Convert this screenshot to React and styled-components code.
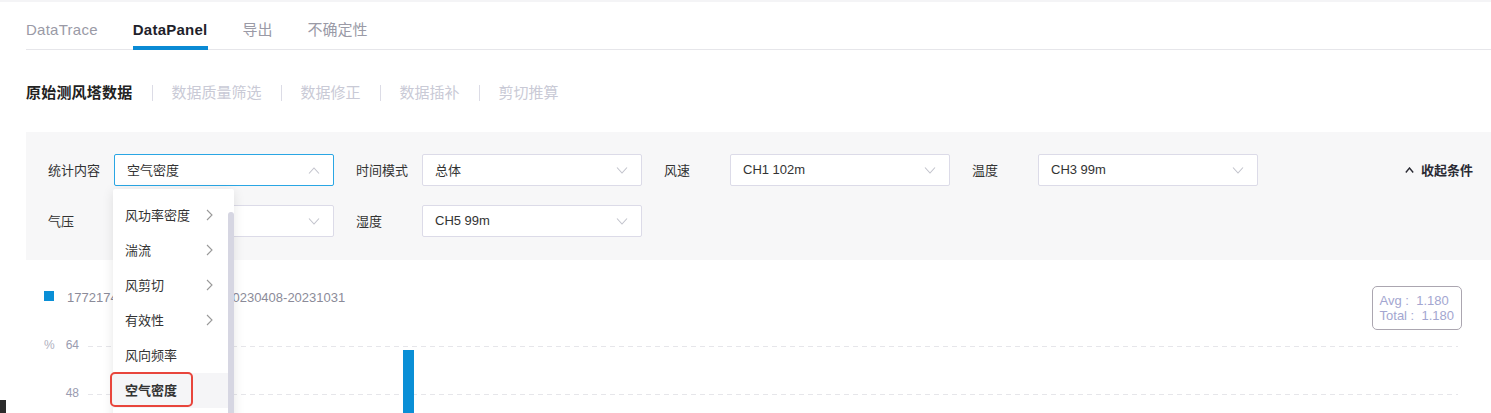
import React from "react";
import styled, { createGlobalStyle } from "styled-components";

const GlobalStyle = createGlobalStyle`
  html, body {
    margin: 0;
    padding: 0;
    overflow: hidden;
    background: #fff;
  }
  body {
    font-family: "Liberation Sans", "Noto Sans CJK SC", sans-serif;
    color: #333;
  }
  * {
    box-sizing: border-box;
  }
`;

const Page = styled.div`
  border-top: 2px solid #f4f4f6;
  padding-left: 26px;
  position: relative;
`;

const TabBar = styled.div`
  display: flex;
  gap: 35px;
  border-bottom: 1px solid #e6e6ea;
`;

const Tab = styled.div`
  padding-top: 18px;
  padding-bottom: 6px;
  line-height: 20px;
  font-size: 15px;
  letter-spacing: ${(p) => (p.$latin ? "0.25px" : "0")};
  margin-bottom: -1px;
  border-bottom: 4px solid ${(p) => (p.$active ? "#0a8ad4" : "transparent")};
  color: ${(p) => (p.$active ? "#1f1f2b" : "#9a9aa6")};
  font-weight: ${(p) => (p.$active ? "bold" : "normal")};
`;

const SubTabs = styled.div`
  display: flex;
  align-items: center;
  margin-top: 32px;
  margin-bottom: 28px;
  line-height: 22px;
  font-size: 15px;
`;

const SubTab = styled.div`
  color: ${(p) => (p.$active ? "#222" : "#c9cad6")};
  font-weight: ${(p) => (p.$active ? "bold" : "normal")};
  letter-spacing: ${(p) => (p.$active ? "0.2px" : "0")};
`;

const SubSep = styled.span`
  width: 1px;
  height: 16px;
  background: #dcdce6;
  margin: 0 18px 0 20px;
`;

const FilterPanel = styled.div`
  display: flex;
  align-items: flex-start;
  background: #f7f7f8;
  padding: 22px 18px 23px 22px;
`;

const Fields = styled.div`
  flex: 1;
  display: flex;
  flex-wrap: wrap;
  column-gap: 22px;
  row-gap: 19px;
`;

const Field = styled.div`
  display: flex;
  align-items: center;
`;

const Label = styled.div`
  width: 66px;
  font-size: 13px;
  color: #333;
  padding-bottom: 2px;
`;

const SelectBox = styled.div`
  position: relative;
  width: 220px;
  height: 32px;
  display: flex;
  align-items: center;
  justify-content: space-between;
  padding: 0 12px;
  background: #fff;
  border: 1px solid ${(p) => (p.$focused ? "#2aa6e4" : "#dcdbe8")};
  border-radius: 2px;
  font-size: 13px;
  color: #333;
`;

const Value = styled.span`
  padding-bottom: 2px;
`;

const Arrow = styled.svg`
  width: 12px;
  height: 7px;
  margin-right: 1px;
`;

const Collapse = styled.div`
  display: flex;
  align-items: center;
  gap: 7px;
  height: 32px;
  padding-bottom: 1px;
  font-size: 13px;
  font-weight: bold;
  color: #2a2a33;
`;

const Menu = styled.div`
  position: absolute;
  top: 34px;
  left: -2px;
  width: 121px;
  height: 235px;
  padding-top: 9px;
  background: #fff;
  box-shadow: 0 2px 12px rgba(0, 0, 0, 0.1);
  border-radius: 2px;
  z-index: 10;
`;

const MenuItem = styled.div`
  position: relative;
  width: 115px;
  height: 35px;
  display: flex;
  align-items: center;
  justify-content: space-between;
  padding: 0 15px 2px 12px;
  font-size: 13px;
  color: #333;
  background: ${(p) => (p.$selected ? "#f5f5f7" : "transparent")};
  font-weight: ${(p) => (p.$selected ? "bold" : "normal")};
`;

const Mark = styled.div`
  position: absolute;
  left: -3px;
  top: -1px;
  width: 83px;
  height: 35px;
  border: 2.5px solid #e8453c;
  border-radius: 5px;
`;

const Thumb = styled.div`
  position: absolute;
  right: 0;
  top: 23px;
  width: 6px;
  height: 212px;
  border-radius: 3px;
  background: #d6d6e2;
`;

const ChartHeader = styled.div`
  display: flex;
  justify-content: space-between;
  align-items: flex-start;
  padding: 26px 29px 0 18px;
`;

const Legend = styled.div`
  display: flex;
  align-items: center;
  gap: 13px;
  height: 20px;
  font-size: 13px;
  color: #8b8b99;
  white-space: nowrap;
`;

const Swatch = styled.span`
  width: 10px;
  height: 10px;
  background: #0a8fd6;
`;

const StatBox = styled.div`
  border: 1px solid #aba6b0;
  border-radius: 5px;
  padding: 6px 7px;
  font-size: 13px;
  line-height: 15px;
  color: #a3a6d0;
  white-space: pre;
`;

const ChartSvg = styled.svg`
  display: block;
  width: 1465px;
  height: 100px;
`;

const CornerBadge = styled.div`
  position: fixed;
  left: 0;
  bottom: 0;
  width: 6px;
  height: 13px;
  background: #2b2b2b;
`;

const ChevronDown = ({ up }) => (
  <Arrow viewBox="0 0 12 7">
    <polyline
      points={up ? "1,6.5 6,1 11,6.5" : "1,0.5 6,6 11,0.5"}
      fill="none"
      stroke="#c2c3cc"
      strokeWidth="1.1"
    />
  </Arrow>
);

const ChevronRight = () => (
  <svg width="7" height="12" viewBox="0 0 7 12">
    <polyline points="1,1 6,6 1,11" fill="none" stroke="#999" strokeWidth="1.1" />
  </svg>
);

const menuItems = [
  { name: "风功率密度", sub: true },
  { name: "湍流", sub: true },
  { name: "风剪切", sub: true },
  { name: "有效性", sub: true },
  { name: "风向频率" },
  { name: "空气密度", selected: true },
];

const fields = [
  { label: "统计内容", value: "空气密度", open: true },
  { label: "时间模式", value: "总体" },
  { label: "风速", value: "CH1 102m" },
  { label: "温度", value: "CH3 99m" },
  { label: "气压", value: "" },
  { label: "湿度", value: "CH5 99m" },
];

const tabs = [
  { name: "DataTrace", latin: true },
  { name: "DataPanel", latin: true, active: true },
  { name: "导出" },
  { name: "不确定性" },
];

const subTabs = ["原始测风塔数据", "数据质量筛选", "数据修正", "数据插补", "剪切推算"];

const App = () => {
  return (
    <>
      <GlobalStyle />
      <Page>
        <TabBar>
          {tabs.map((t) => (
            <Tab key={t.name} $active={t.active} $latin={t.latin}>
              {t.name}
            </Tab>
          ))}
        </TabBar>

        <SubTabs>
          {subTabs.map((t, i) => (
            <React.Fragment key={t}>
              {i > 0 && <SubSep />}
              <SubTab $active={i === 0}>{t}</SubTab>
            </React.Fragment>
          ))}
        </SubTabs>

        <FilterPanel>
          <Fields>
            {fields.map((f) => (
              <Field key={f.label}>
                <Label>{f.label}</Label>
                <SelectBox $focused={f.open}>
                  <Value>{f.value}</Value>
                  <ChevronDown up={f.open} />
                  {f.open && (
                    <Menu>
                      {menuItems.map((m) => (
                        <MenuItem key={m.name} $selected={m.selected}>
                          <span>{m.name}</span>
                          {m.sub && <ChevronRight />}
                          {m.selected && <Mark />}
                        </MenuItem>
                      ))}
                      <Thumb />
                    </Menu>
                  )}
                </SelectBox>
              </Field>
            ))}
          </Fields>
          <Collapse>
            <svg width="9" height="6" viewBox="0 0 9 6">
              <polyline points="0.8,5.5 4.5,1 8.2,5.5" fill="none" stroke="#2a2a33" strokeWidth="1.4" />
            </svg>
            收起条件
          </Collapse>
        </FilterPanel>

        <ChartHeader>
          <Legend>
            <Swatch />
            <span>17721745 空气密度(kg/m³) 20230408-20231031</span>
          </Legend>
          <StatBox>{"Avg :  1.180\nTotal :  1.180"}</StatBox>
        </ChartHeader>

        <ChartSvg viewBox="0 0 1465 100">
          <text x="18" y="16" fontSize="12" fill="#b0b1c0" dominantBaseline="middle" fontFamily="Liberation Sans">%</text>
          <text x="53" y="16" fontSize="12" fill="#9a9cb0" textAnchor="end" dominantBaseline="middle" fontFamily="Liberation Sans">64</text>
          <text x="53" y="64" fontSize="12" fill="#9a9cb0" textAnchor="end" dominantBaseline="middle" fontFamily="Liberation Sans">48</text>
          <line x1="62" y1="16.5" x2="1432" y2="16.5" stroke="#e6e6ea" strokeDasharray="5 4" />
          <line x1="62" y1="64.5" x2="1432" y2="64.5" stroke="#e6e6ea" strokeDasharray="5 4" />
          <rect x="377" y="20" width="11" height="80" fill="#0a8fd6" />
        </ChartSvg>
      </Page>
      <CornerBadge />
    </>
  );
};

export default App;
